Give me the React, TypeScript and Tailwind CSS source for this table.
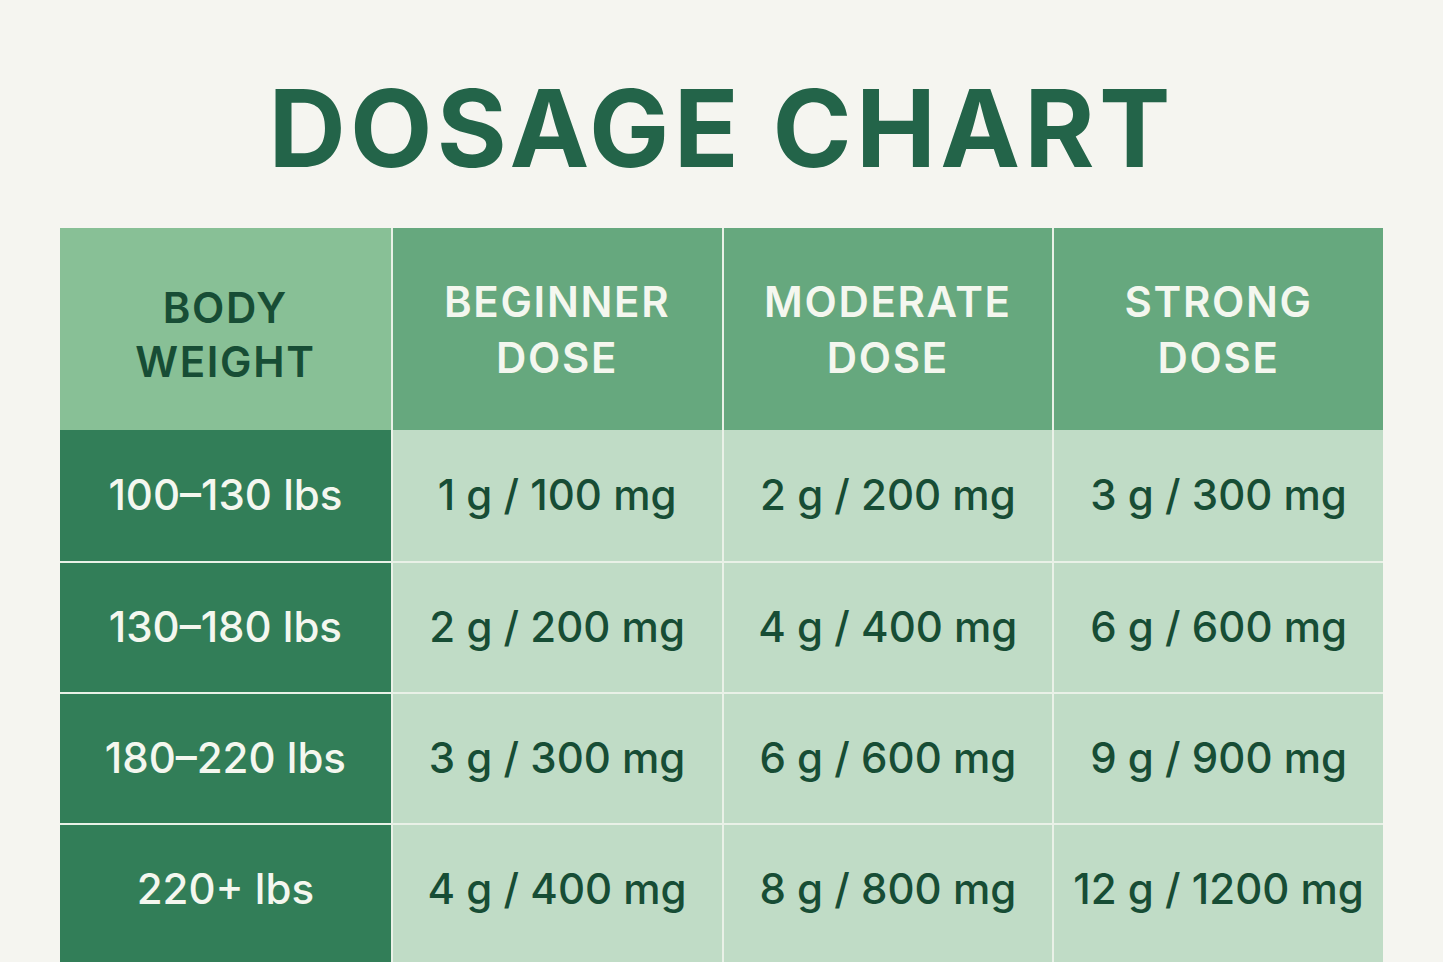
const rows = [
  ["100–130 lbs", "1 g / 100 mg", "2 g / 200 mg", "3 g / 300 mg"],
  ["130–180 lbs", "2 g / 200 mg", "4 g / 400 mg", "6 g / 600 mg"],
  ["180–220 lbs", "3 g / 300 mg", "6 g / 600 mg", "9 g / 900 mg"],
  ["220+ lbs", "4 g / 400 mg", "8 g / 800 mg", "12 g / 1200 mg"],
];

const heads = [
  ["BEGINNER", "DOSE"],
  ["MODERATE", "DOSE"],
  ["STRONG", "DOSE"],
];

export default function App() {
  return (
    <div
      className="h-[962px] w-full overflow-hidden bg-[#f5f5f0]"
      style={{ fontFamily: "Inter, 'Open Sans', sans-serif" }}
    >
      <div className="flex h-[228px] items-center justify-center pt-[28px]">
        <h1 className="text-[107px] font-bold leading-none tracking-[0.04em] text-[#236449]">
          DOSAGE CHART
        </h1>
      </div>
      <div className="mx-[60px] grid grid-cols-4 bg-[#e9f1e7]">
        <div className="flex h-[202px] flex-col items-center justify-center bg-[#88c096] pt-[12px] text-[42px] font-semibold leading-[54px] tracking-[0.04em] text-[#174d35]">
          <span>BODY</span>
          <span>WEIGHT</span>
        </div>
        {heads.map((h, i) => (
          <div
            key={i}
            className="flex h-[202px] flex-col items-center justify-center border-l-2 border-[#e9f1e7] bg-[#66a87e] pt-[2px] text-[42px] font-semibold leading-[56px] tracking-[0.04em] text-[#f4f7ef]"
          >
            <span>{h[0]}</span>
            <span>{h[1]}</span>
          </div>
        ))}
        {rows.map((r, ri) =>
          r.map((c, ci) => (
            <div
              key={ri + "-" + ci}
              className={
                "flex items-center justify-center text-[42px] font-medium " +
                (ri === 3 ? "h-[140px] pb-[12px] " : "h-[131px] pb-[2px] ") +
                (ri > 0 ? "border-t-2 border-[#e9f1e7] " : "") +
                (ci === 0
                  ? "bg-[#327e58] text-[#f4f7ef]"
                  : "border-l-2 border-[#e9f1e7] bg-[#c0dcc6] text-[#174d35]")
              }
            >
              {c}
            </div>
          ))
        )}
      </div>
    </div>
  );
}
